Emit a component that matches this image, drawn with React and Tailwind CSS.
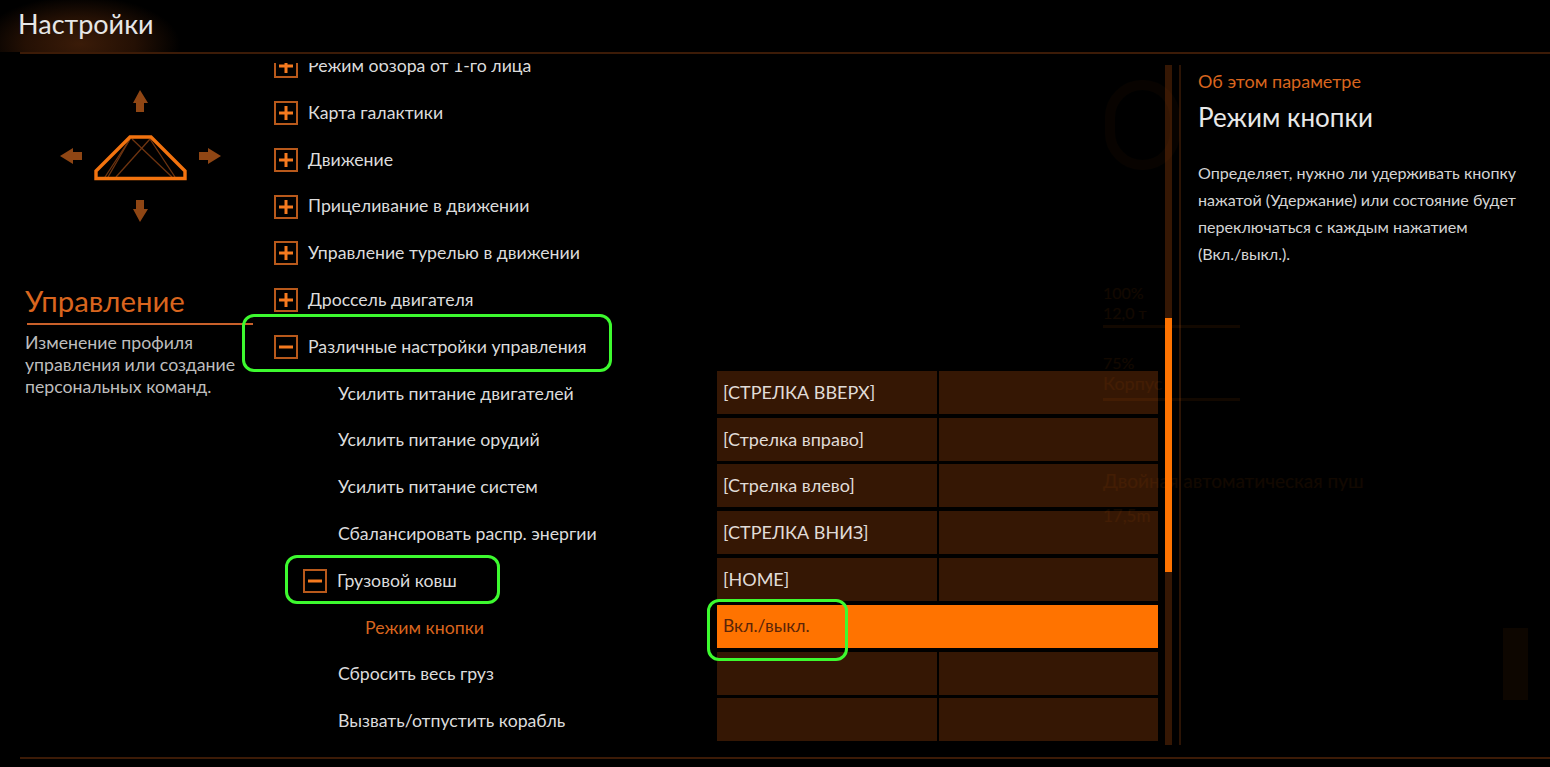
const rows = [
  { label: "Режим обзора от 1-го лица", icon: "plus" },
  { label: "Карта галактики", icon: "plus" },
  { label: "Движение", icon: "plus" },
  { label: "Прицеливание в движении", icon: "plus" },
  { label: "Управление турелью в движении", icon: "plus" },
  { label: "Дроссель двигателя", icon: "plus" },
  { label: "Различные настройки управления", icon: "minus" },
  { label: "Усилить питание двигателей", sub: 1, key: "[СТРЕЛКА ВВЕРХ]" },
  { label: "Усилить питание орудий", sub: 1, key: "[Стрелка вправо]" },
  { label: "Усилить питание систем", sub: 1, key: "[Стрелка влево]" },
  { label: "Сбалансировать распр. энергии", sub: 1, key: "[СТРЕЛКА ВНИЗ]" },
  { label: "Грузовой ковш", sub: 1, icon: "minus", key: "[HOME]" },
  { label: "Режим кнопки", sub: 2, key: "Вкл./выкл.", active: true },
  { label: "Сбросить весь груз", sub: 1, key: "" },
  { label: "Вызвать/отпустить корабль", sub: 1, key: "" },
];

function Toggle({ type }) {
  return (
    <svg width="24" height="24" viewBox="0 0 24 24" className="shrink-0">
      <rect x="1" y="1" width="22" height="22" fill="none" stroke="#b8591b" strokeWidth="2" />
      <rect x="5" y="10.5" width="14" height="3" fill="#f57a1f" />
      {type === "plus" && <rect x="10.5" y="5" width="3" height="14" fill="#f57a1f" />}
    </svg>
  );
}

function ShipGraphic() {
  return (
    <svg width="170" height="136" viewBox="55 88 170 136" className="block">
      <g fill="#8f4614">
        <path d="M140 90 L148 103 L144 103 L144 112 L136 112 L136 103 L133 103 Z" />
        <path d="M140 222 L148 209 L144 209 L144 200 L136 200 L136 209 L133 209 Z" />
        <path d="M60 156 L73 148 L73 152 L82 152 L82 160 L73 160 L73 164 Z" />
        <path d="M221 156 L208 148 L208 152 L199 152 L199 160 L208 160 L208 164 Z" />
      </g>
      <g stroke="#6e3410" strokeWidth="1.3" fill="none">
        <path d="M130 139 L108 177" />
        <path d="M150 139 L116 177" />
        <path d="M132 139 L172 177" />
        <path d="M150 139 L175 177" />
        <path d="M130 139 L105 177" />
      </g>
      <path d="M130 137 L151 137 L185 171 L185 178.5 L96 178.5 L96 171 Z" fill="none" stroke="#f2730f" strokeWidth="3.4" />
    </svg>
  );
}

function Row({ row }) {
  const pad = row.sub === 2 ? "pl-[91px]" : row.sub === 1 ? (row.icon ? "pl-[29px]" : "pl-[64px]") : "";
  const textColor = row.active ? "text-[#d9651e]" : "text-[#dcdcdc]";
  return (
    <div className="flex h-[46.8px] items-center">
      <div className={`flex min-w-0 flex-1 items-center ${pad}`}>
        {row.icon && <Toggle type={row.icon} />}
        <span className={`${row.icon ? "ml-[10px]" : ""} whitespace-nowrap text-[17.7px] ${textColor}`}>{row.label}</span>
      </div>
      {row.key !== undefined &&
        (row.active ? (
          <div className="mb-[3px] flex h-[43px] w-[441px] shrink-0 items-center bg-[#ff7300] pl-[6px] text-[17.5px] text-[#5a2408]">
            {row.key}
          </div>
        ) : (
          <div className="mb-[3px] flex h-[43px] w-[441px] shrink-0 gap-[2px]">
            <div className="flex w-[220px] items-center bg-[#351704] pl-[6px] text-[18px] text-[#e0dcd8]">{row.key}</div>
            <div className="flex-1 bg-[#351704]" />
          </div>
        ))}
    </div>
  );
}

function Ghost() {
  return (
    <div className="pointer-events-none absolute inset-0 text-[#ff7300]/[0.07]">
      <div className="absolute left-[1105px] top-[80px] h-[90px] w-[75px] rounded-full border-[10px] border-[#ff7300]/[0.03]" />
      <div className="absolute left-[1103px] top-[284px] text-[16px] leading-[18px]">100%</div>
      <div className="absolute left-[1103px] top-[304px] text-[16px] leading-[18px]">12,0 т</div>
      <div className="absolute left-[1103px] top-[325px] h-[3px] w-[137px] bg-[#ff7300]/[0.07]" />
      <div className="absolute left-[1103px] top-[354px] text-[16px] leading-[18px]">75%</div>
      <div className="absolute left-[1103px] top-[373px] text-[18px] leading-[20px]">Корпус</div>
      <div className="absolute left-[1103px] top-[398px] h-[3px] w-[137px] bg-[#ff7300]/[0.07]" />
      <div className="absolute left-[1103px] top-[469px] whitespace-nowrap text-[19px] leading-[24px]">Двойная автоматическая пуш</div>
      <div className="absolute left-[1103px] top-[506px] text-[17px] leading-[20px]">17,5m</div>
      <div className="absolute left-[1503px] top-[628px] h-[72px] w-[25px] bg-[#ff7300]/[0.05]" />
    </div>
  );
}

export default function App() {
  return (
    <div className="relative flex h-[767px] w-[1550px] flex-col overflow-hidden bg-black font-['Lato','Open_Sans',sans-serif]">
      <header className="relative h-[54px] shrink-0 pl-[20px]">
        <div className="flex h-[54px] items-start border-b-2 border-[#3c1b07]">
          <div className="-ml-[20px] h-[52px] w-[190px] bg-[radial-gradient(ellipse_100px_48px_at_80px_44px,#3a1b08_0%,#241004_55%,#000000_100%)] pl-[18px] pt-[5px] text-[27px] leading-[38px] text-[#e6e6e6]">
            Настройки
          </div>
        </div>
      </header>

      <main className="relative flex min-h-0 flex-1">
        <aside className="w-[274px] shrink-0 pl-[25px]">
          <div className="mt-[34px] pl-[30px]">
            <ShipGraphic />
          </div>
          <h2 className="mt-[58px] text-[29.3px] leading-[38px] text-[#d9651e]">Управление</h2>
          <div className="ml-[2px] mt-[3px] h-[2px] w-[226px] bg-[#c9602a]" />
          <p className="mt-[7px] w-[225px] text-[17.7px] leading-[22px] text-[#bdbdbd]">
            Изменение профиля управления или создание персональных команд.
          </p>
        </aside>

        <section className="mt-[9px] h-[682px] w-[884px] shrink-0 overflow-hidden">
          <div className="-mt-[20.1px]">
            {rows.map((r) => (
              <Row key={r.label} row={r} />
            ))}
          </div>
        </section>

        <div className="ml-[7px] mt-[11px] flex h-[680px] w-[7px] shrink-0 flex-col bg-[#351704]">
          <div className="mt-[253px] h-[254px] w-full bg-[#ff7300]" />
        </div>
        <div className="ml-[7px] mt-[11px] h-[680px] w-[2px] shrink-0 bg-[#2c1405]" />

        <aside className="flex-1 pl-[17px] pt-[16px]">
          <div className="text-[18px] leading-[22px] text-[#d9651e]">Об этом параметре</div>
          <h3 className="mt-[7px] text-[26px] leading-[36px] text-[#e8e8e8]">Режим кнопки</h3>
          <p className="mt-[24px] w-[340px] text-[16.1px] leading-[27px] text-[#d4d4d4]">
            Определяет, нужно ли удерживать кнопку нажатой (Удержание) или состояние будет переключаться с каждым нажатием <span className="whitespace-nowrap">(Вкл./выкл.).</span>
          </p>
        </aside>
      </main>

      <footer className="mb-[8px] ml-[20px] mt-auto h-[2px] shrink-0 bg-[#3c1b07]" />

      <Ghost />

      <div className="pointer-events-none absolute left-[242px] top-[314px] h-[58px] w-[370px] rounded-[12px] border-[3.5px] border-[#3dfa2f]" />
      <div className="pointer-events-none absolute left-[285px] top-[555px] h-[49px] w-[215px] rounded-[12px] border-[3.5px] border-[#3dfa2f]" />
      <div className="pointer-events-none absolute left-[707px] top-[599px] h-[62px] w-[141px] rounded-[12px] border-[3.5px] border-[#3dfa2f]" />
    </div>
  );
}
